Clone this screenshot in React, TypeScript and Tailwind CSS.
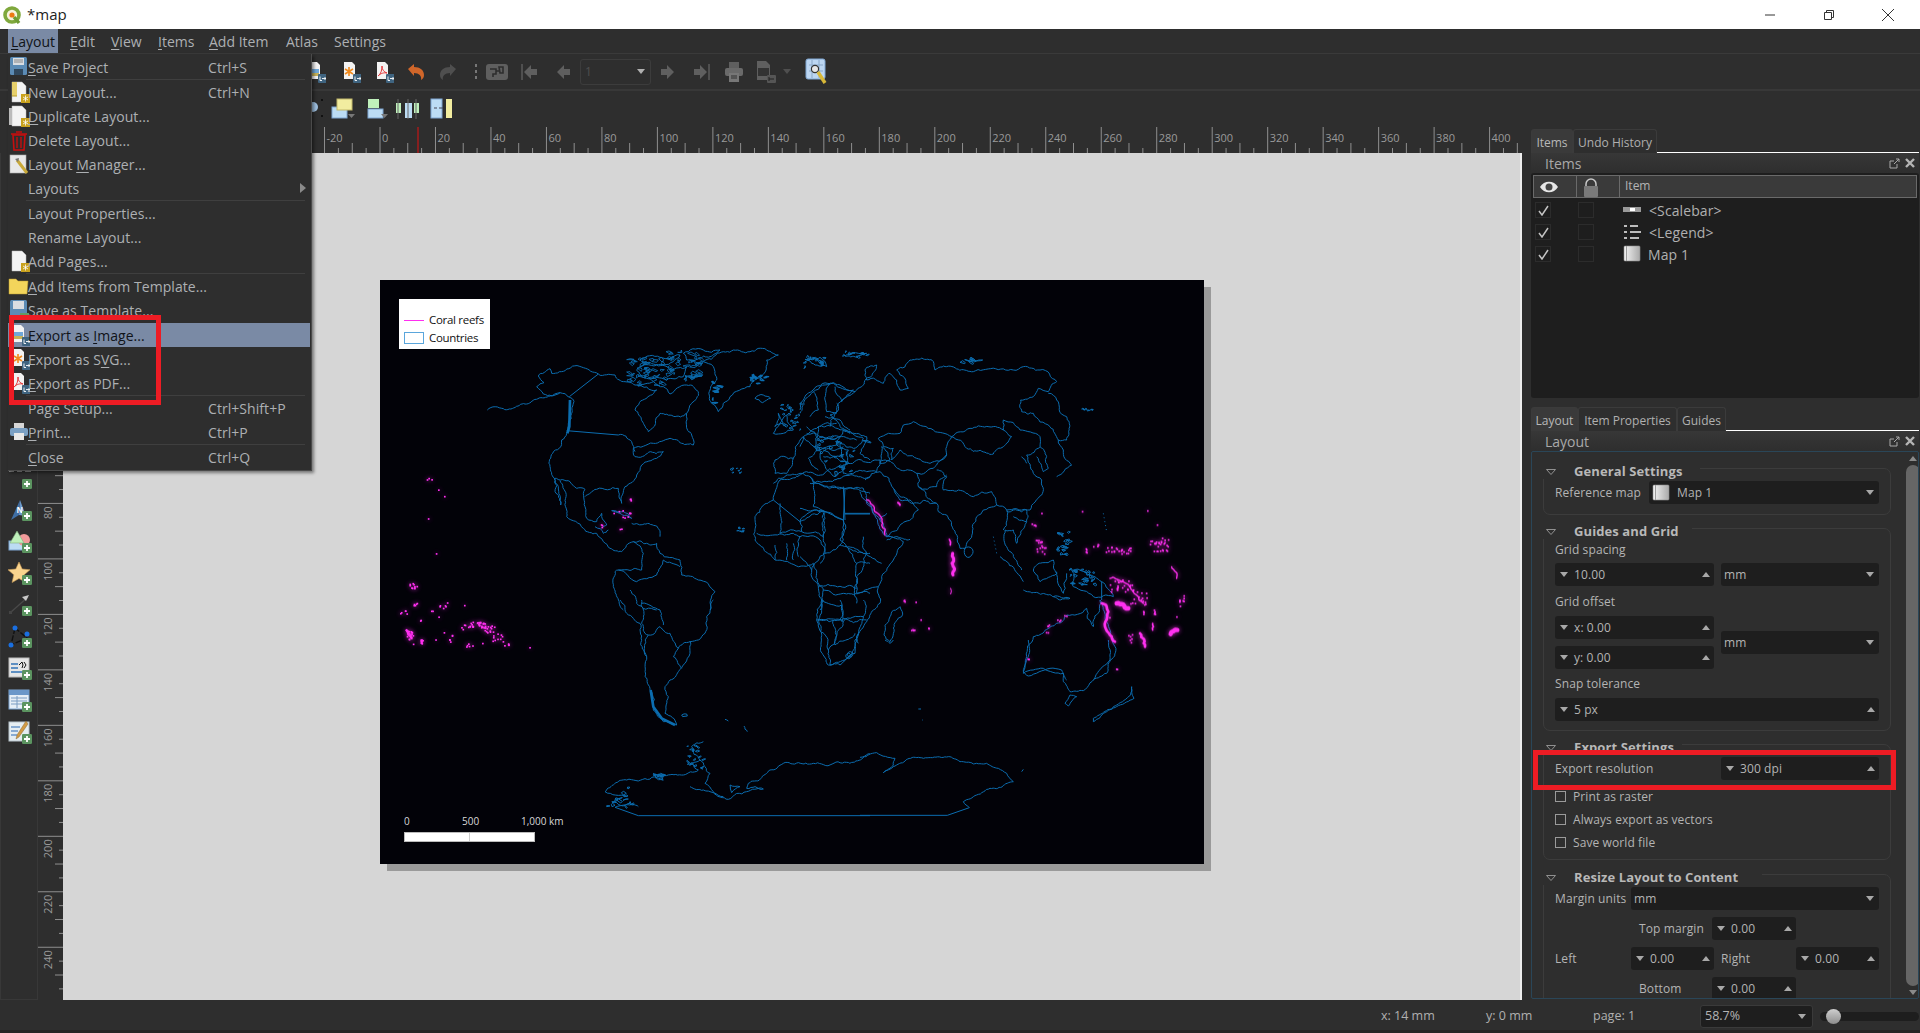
import React from "react";

const FONT = "font-['Open_Sans','Noto_Sans',sans-serif]";

function rng(seed: number) {
  let s = seed;
  return () => {
    s = (s * 16807) % 2147483647;
    return s / 2147483647;
  };
}
function scatterIslands(seed: number, n: number, x0: number, y0: number, x1: number, y1: number, size = 14) {
  const r = rng(seed);
  let d = "";
  for (let i = 0; i < n; i++) {
    const x = x0 + r() * (x1 - x0);
    const y = y0 + r() * (y1 - y0);
    d += `M${x.toFixed(0)},${y.toFixed(0)} l${(r() * size).toFixed(0)},${(-r() * size * 0.6).toFixed(0)} l${(r() * size).toFixed(0)},${(r() * size * 0.7).toFixed(0)} l${(-r() * size).toFixed(0)},${(r() * size * 0.5).toFixed(0)} z `;
  }
  return d;
}
function dots(seed: number, clusters: number[][]) {
  const r = rng(seed);
  const out: number[][] = [];
  clusters.forEach(([x, y, rx, ry, n]) => {
    for (let i = 0; i < n; i++) out.push([x + (r() * 2 - 1) * rx, y + (r() * 2 - 1) * ry]);
  });
  return out;
}
// Midpoint displacement: turns coarse polylines into irregular coast / border lines.
function rough(d: string, seed: number, amount = 0.16) {
  if (d[0] === "!") return d.slice(1);
  if (/[alz]/.test(d)) return d;
  const r = rng(seed * 131 + 7);
  const re = /([MLZ])\s*(-?[\d.]+),(-?[\d.]+)|Z/g;
  let m: RegExpExecArray | null;
  let out = "";
  let cur: number[] | null = null;
  let start: number[] | null = null;
  const seg = (a: number[], b: number[]): string => {
    const dx = b[0] - a[0];
    const dy = b[1] - a[1];
    const len = Math.hypot(dx, dy);
    if (len < 9) return `L${b[0].toFixed(1)},${b[1].toFixed(1)} `;
    const k = (r() * 2 - 1) * Math.min(len * amount, 9);
    const mid = [a[0] + dx / 2 - (dy / len) * k, a[1] + dy / 2 + (dx / len) * k];
    return seg(a, mid) + seg(mid, b);
  };
  while ((m = re.exec(d))) {
    if (m[0] === "Z") {
      if (cur && start) out += seg(cur, start);
      cur = start;
      continue;
    }
    const p = [parseFloat(m[2]), parseFloat(m[3])];
    if (m[1] === "M") {
      out += `M${p[0]},${p[1]} `;
      start = p;
    } else if (cur) {
      out += seg(cur, p);
    }
    cur = p;
  }
  return out;
}

const BLUE = "#0b6db0";

const pathsA = [
  "M352,420 L400,416 L470,402 L540,378 L570,368 L598,382",
  "M570,368 L520,372 L500,350 L522,338 L505,318 L540,296 L545,310 L590,297 L640,293 L685,312 L735,315 L765,335 L800,345 L850,335 L880,350 L900,372 L950,345 L985,365 L965,400 L950,430 L965,495 L970,525 L935,520 L900,505 L850,520 L790,535 L795,560 L880,545 L860,565 L815,585 L800,615 L765,650 L755,700 L745,655 L680,658 L645,680",
  "!M598,380 L685,312",
  "!M590,482 L745,495",
  "M745,495 L785,515 L795,545",
  "M598,382 L612,395 L605,430 L595,460 L590,490 L575,510 L548,550 L540,590 L553,625 L565,650 L572,705 L558,670 L553,625 L600,635 L620,655 L645,658 L645,710 L650,745 L680,755 L695,730 L710,765 L695,775",
  "M570,632 L590,720 L590,740 L640,775 L680,790 L700,815 L720,835 L755,845 L790,815 L860,820 L870,850 L930,870 L935,915 L985,930 L1035,965 L1020,1020",
  "M675,770 L700,790 L715,780 M725,722 L760,725 L785,745 L750,730 Z M785,760 L860,768 L870,800",
  "M950,430 L870,430 L835,485 L795,420 L830,385 L860,360 L800,345",
  "M800,300 L860,285 L900,300 L950,290 L940,320 L890,330 L830,325 Z",
  "M810,270 L870,262 L930,255 L910,275 L850,282 Z",
  "M940,250 L1000,240 L1050,240 L1020,260 L950,270 Z",
  "M1000,275 L1090,240 L1190,240 L1225,255 L1190,270 L1175,320 L1140,350 L1080,380 L1045,425 L1025,400 L1020,360 L1040,330 L1030,290 Z",
  "M1155,385 L1180,375 L1202,385 L1178,398 Z M1305,268 L1350,262 L1370,290 L1325,280 Z M1425,258 L1490,250 L1460,262 Z",
  "M735,905 L745,900 L800,935 L860,915 L880,870 L930,890 M735,905 L730,950 L760,1020 M780,960 L800,1000 L860,1020",
  "M790,815 L820,850 L815,900 L745,900",
  "M1155,740 L1210,690 L1230,630 L1300,610 L1320,620 L1340,640 L1420,655 L1500,670 M1155,740 L1155,810 L1215,870 L1330,880 L1360,960 L1350,1020",
  "!M1210,690 L1290,755",
  "!M1360,722 L1420,750 L1425,655",
  "!M1425,732 L1500,732",
  "M1290,755 L1295,785 L1230,790 L1230,700 M1290,755 L1360,722 M1360,722 L1360,800 M1295,785 L1360,800 L1350,880 M1160,790 L1270,790 L1290,800 L1285,860 M1320,620 L1330,710 L1360,722 M1215,825 L1215,870 M1250,820 L1250,870 M1270,820 L1270,870",
  "M1420,750 L1410,810 L1430,830 L1500,850 M1430,830 L1460,880 L1500,880 M1460,880 L1460,1000 M1360,960 L1420,970 L1500,970",
  "M1215,570 L1270,565 L1250,610 L1215,610 Z M1210,490 L1250,435 L1270,480 L1240,490 Z M1225,430 L1240,460 L1215,470 Z",
  "M1290,430 L1330,365 L1390,340 L1450,360 L1405,400 L1380,470 M1330,365 L1345,420 L1320,440 M1380,340 L1365,390 L1370,425 L1400,430",
  "M1270,565 L1300,500 L1345,470 L1420,480 L1490,500 L1470,550 L1500,570 M1300,500 L1340,540 L1315,565 L1345,600 M1345,470 L1340,540 L1400,525 L1420,480 M1400,525 L1435,540 L1420,600 L1395,620 L1350,550 M1420,480 L1440,490 M1365,440 L1410,450 L1440,480 M1380,505 L1460,510",
  "M1310,490 L1350,500 L1390,495 M1340,510 L1400,505 M1360,540 L1420,560 M1390,560 L1430,575 M1300,500 L1290,530",
  "M1210,640 L1290,610 M1320,640 L1500,620",
];

const pathsB = [
  "M0,210 L10,180 L40,150 L100,128 L165,155 L125,185 L105,140 M165,155 L185,140 L230,75 L195,90 L200,120 L250,130 L270,100 L290,120 L300,150 L325,145 L290,90 L330,60 L400,65 L405,90 L440,80 L520,95 L640,90 L670,80 L720,90 L770,125 L745,155 L715,145 L700,170 L662,180 L665,215 L700,220 L750,260 L775,300 L800,300 L800,230 L770,180 L745,160",
  "M110,190 L115,210 L90,225 L120,260 L190,295 L160,325 L120,310 L140,370",
  "M60,260 L110,250 M50,300 L120,290 M40,320 L130,320 M70,350 L110,350 M20,260 L60,300",
  "M235,295 L300,280 L310,255 L340,245 L400,270 L455,290 L510,265 L610,270 L610,240 L660,270 L720,290 L720,320 L680,345 L700,400 L725,420 L725,465 L690,510 L640,510 L620,515",
  "M455,290 L500,325 L580,342 L610,320 L635,290 L610,270",
  "M235,295 L250,320 L280,325 L275,360 L300,330 L350,355 L390,370 L440,345 L440,320 L455,290",
  "M720,320 L745,385 L730,395 L710,350 M770,410 L815,375 L790,330 L775,300 M665,350 L680,370",
  "M245,320 L270,360 L240,370 L245,340 Z",
  "M130,375 L240,360 L230,395 L200,395 L130,400 Z M0,400 L50,405 L130,375",
  "M195,420 L240,395 L280,445 L300,480 L330,480 L340,490 L355,510 L315,545 L260,590 L240,540 L205,490 L180,455",
  "M240,365 L280,370 L350,400 L355,440 L410,490 L340,490 L300,470 L280,445 M350,400 L400,385 L440,345 M355,440 L410,440 L440,405",
  "M410,390 L440,410 L430,450 L475,450 L520,470 L575,455 L590,495 L550,510 L530,530 L495,625 L480,625 L440,525 L415,515 L410,490",
  "M495,625 a10,14 0 1,0 20,20 a10,10 0 1,0 -20,-20 Z",
  "M590,495 L620,510 L680,510 L680,545 L650,610 L640,570 L615,570 L620,620 L665,690 M620,510 L610,570 M680,545 L640,530",
  "M700,690 L760,660 L770,700 L720,725 Z M600,650 L670,725 M670,750 L810,775 L760,770 M815,690 L905,725 L940,770 L880,770 L820,740 Z M770,695 L790,760 L800,700",
  "!M905,725 L905,780",
  "M680,950 L700,890 L770,850 L800,825 L860,805 L880,860 L900,780 L930,870 L945,920 L920,1000 L880,1020 M680,950 L670,1000 L730,985 L790,1000 L800,1020",
  "!M135,520 L210,520",
  "!M130,440 L135,540",
  "M0,545 L50,510 L75,515 L130,540 M40,430 L190,445 L200,490 L260,590 L310,605 L280,660 L245,710 L235,740 L240,790 L195,850 L165,900 L165,940 L120,975 L85,975 L55,840 L65,780 L55,740 L35,690 L0,650",
  "M0,590 L60,600 L75,640 L120,615 L190,640 L245,670 M130,540 L130,600 L120,615 M190,590 L200,640 L170,710 L170,760 L235,740 M55,740 L170,745 M65,780 L125,795 L120,840 L55,840 M120,840 L200,840 M100,840 L105,915 L165,880 M75,640 L35,690 M0,505 L50,510 L75,515 L70,590 M240,540 L260,520",
  "M300,800 L305,830 L270,905 L252,885 L270,830 Z",
  "M150,935 a8,8 0 1,0 1,0 z",
  "M260,600 L330,598",
];

const pathsC = [
  "M750,0 L770,40 L810,70 L830,170 L825,230 L840,270 L850,330 L880,365 L920,375 L885,340 L895,290 L885,260 L900,240 L925,215 L945,190 L960,160 L960,125 L1005,100 L1010,50 L1030,0",
  "M815,0 L815,70 L835,105 L830,170 M835,105 L870,80 L900,100 L925,145 L910,170 L935,205 M815,10 L870,30 L880,75 M925,145 L960,125",
  "!M735,622 L805,647 L1500,647",
  "M735,622 L805,620 M725,605 L780,610 M705,575 L770,590 M705,575 L770,540 L880,540 L850,520 L940,525 L985,510 L965,490 L990,480 L965,440 L1000,425",
  "M1500,462 L1430,487 L1330,490 L1240,490 L1200,510 L1135,550 L1130,565 L1180,567 L1130,575 L1075,598 L1030,575 L1005,550 L1020,520 L990,480 M960,560 L1000,570 L1060,590 M1080,555 L1110,560 L1085,578 Z",
  "M1340,60 L1375,150 L1380,195 L1430,175 L1465,100 M1340,60 L1420,65 L1480,50 M1360,0 L1340,60 M1375,150 L1395,130 L1420,65",
  "M1435,160 a8,8 0 1,0 1,0 z",
  "M1410,0 L1415,65 M1480,0 L1480,50 L1465,130",
  "M935,345 L950,342 L952,348 L938,350 Z M1065,358 L1075,363 M1122,378 L1132,395",
];

const pathsD = [
  "M0,352 L50,338 L105,355 L100,375 L70,398 L110,375 L180,353 L265,350 L300,365 L380,370 L415,385 L440,400 L460,425 L390,445 L350,465 L310,485 L328,503",
  "!M328,503 L262,526 L0,526",
  "M505,0 L505,50 L490,95 L505,108 L570,85 L605,90 L610,125 L630,155 L670,152 L750,60 L745,0",
  "M630,165 L650,170 L625,198 L615,190 Z M815,140 L822,175 L775,197 L700,245 L700,235 L770,195 L812,165 Z",
  "M75,0 L90,10 L100,0",
  "M175,207 L183,207 M186,240 L188,240 M485,395 L490,388",
];

const reefStrokesB = [
  "M200,480 L225,515 L245,555 L255,585|4",
  "M294,488 L300,495|6",
  "M448,598 L451,615|5",
  "M458,640 L456,670 L459,705|9",
  "M452,745 L452,762|3",
  "M905,790 L920,800 L915,860 L930,885 L945,905|8",
  "M950,790 L985,805|13",
  "M1020,880 L1035,920|8",
  "M1112,882 L1132,870|13",
  "M930,715 L990,740 L1030,790|4",
  "M1115,680 L1130,715|4",
  "M1058,850 L1058,870|5",
];

const dotsA = dots(11, [
  [178, 628, 8, 5, 3], [204, 658, 1, 1, 1], [222, 678, 1, 1, 1], [174, 744, 1, 1, 1], [198, 850, 1, 3, 1],
  [130, 947, 12, 10, 10], [135, 1000, 5, 5, 2], [212, 1010, 15, 5, 3],
  [750, 725, 30, 5, 6], [765, 738, 8, 5, 3], [777, 686, 5, 4, 3], [695, 767, 3, 5, 3], [750, 776, 5, 1, 2],
]);
const dotsB = dots(23, [
  [722, 620, 15, 22, 16], [700, 555, 6, 6, 4], [723, 518, 1, 1, 1], [845, 513, 1, 1, 1], [1040, 510, 1, 1, 1], [1070, 553, 1, 1, 1],
  [858, 630, 3, 6, 4], [885, 615, 10, 10, 4], [940, 628, 25, 8, 14], [985, 632, 25, 12, 8],
  [1075, 610, 30, 22, 28], [1128, 828, 1, 1, 1], [1145, 785, 8, 25, 8], [1060, 810, 4, 12, 5],
  [960, 735, 35, 20, 22], [1010, 770, 30, 25, 18], [1025, 820, 5, 8, 3], [990, 895, 8, 15, 6], [930, 830, 3, 3, 1],
  [312, 780, 2, 4, 3], [347, 785, 1, 1, 1], [362, 838, 1, 1, 1], [345, 868, 15, 3, 4], [384, 864, 2, 2, 2],
  [745, 855, 5, 3, 3], [775, 840, 5, 3, 3], [795, 825, 4, 2, 2], [740, 876, 3, 1, 2], [683, 952, 2, 5, 3], [948, 985, 3, 2, 2],
]);
const dotsC = dots(37, [
  [100, 35, 10, 5, 5], [118, 102, 10, 15, 18], [155, 125, 3, 8, 6], [150, 60, 4, 2, 2], [130, 130, 2, 1, 1],
  [320, 72, 25, 10, 22], [350, 85, 22, 12, 16], [290, 80, 25, 8, 8], [385, 115, 18, 15, 10], [405, 130, 10, 5, 4],
  [310, 133, 28, 6, 6], [240, 118, 5, 6, 3], [245, 105, 3, 2, 2], [220, 97, 1, 1, 1], [195, 118, 1, 1, 1], [478, 141, 1, 1, 1],
  [210, 18, 3, 3, 2], [230, 8, 2, 2, 1], [282, 14, 1, 1, 1], [185, 32, 3, 3, 2], [205, 50, 1, 1, 1], [135, 12, 5, 3, 3],
]);

function ReefDots({ list }: { list: number[][] }) {
  return (
    <>
      {list.map((p, i) => (
        <rect key={i} x={p[0]} y={p[1]} width="5" height="5" fill="#ff30f0" />
      ))}
    </>
  );
}

function WorldMap() {
  const T = 1 / 3;
  const reefs = (
    <>
      <g transform={`translate(370,270) scale(${T})`}>
        <ReefDots list={dotsA} />
      </g>
      <g transform={`translate(800,340) scale(${T})`}>
        {reefStrokesB.map((s, i) => {
          const [d, w] = s.split("|");
          return <path key={i} d={rough(d, i + 200, 0.22)} stroke="#ff30f0" strokeWidth={w} fill="none" strokeLinecap="round" strokeLinejoin="round" />;
        })}
        <ReefDots list={dotsB} />
      </g>
      <g transform={`translate(370,600) scale(${T})`}>
        <path d="M108,88 L125,115 M155,118 L155,132" stroke="#ff30f0" strokeWidth="7" fill="none" />
        <ReefDots list={dotsC} />
      </g>
    </>
  );
  return (
    <svg viewBox="380 280 824 584" className="block w-[824px] h-[584px]">
      <defs>
        <filter id="glow" x="-10%" y="-10%" width="120%" height="120%">
          <feGaussianBlur stdDeviation="2.8" />
        </filter>
      </defs>
      <g fill="none" stroke={BLUE} strokeLinejoin="round">
        <g transform={`translate(370,270) scale(${T})`} strokeWidth="3">
          {pathsA.map((d, i) => <path key={i} d={rough(d, i + 1)} />)}
          <path d={scatterIslands(5, 44, 770, 262, 900, 345, 14)} strokeWidth="2.6" />
          <path d={scatterIslands(7, 34, 880, 245, 985, 330, 14)} strokeWidth="2.6" />
          <path d={scatterIslands(9, 22, 1230, 400, 1290, 480, 8)} />
          <path d={scatterIslands(17, 20, 1340, 500, 1480, 610, 12)} />
          <path d={scatterIslands(31, 8, 1025, 330, 1045, 400, 10)} strokeWidth="3.6" />
          <path d={scatterIslands(33, 10, 1140, 310, 1185, 345, 10)} strokeWidth="3.6" />
          <path d="M600,390 L598,470 L592,490" strokeWidth="8" />
          <path d={scatterIslands(41, 8, 1080, 590, 1115, 610, 5)} />
          <path d={scatterIslands(43, 8, 1100, 770, 1120, 790, 5)} />
        </g>
        <g transform={`translate(800,340) scale(${T})`} strokeWidth="3">
          {pathsB.map((d, i) => <path key={i} d={rough(d, i + 60)} />)}
          <path d={scatterIslands(53, 16, 15, 50, 70, 80, 10)} />
          <path d={scatterIslands(57, 8, 130, 38, 200, 50, 10)} />
          <path d={scatterIslands(59, 20, 770, 570, 805, 645, 9)} />
          <path d={scatterIslands(61, 22, 810, 690, 880, 735, 10)} />
          <path d={scatterIslands(67, 8, 480, 55, 530, 70, 12)} />
          <path d={scatterIslands(71, 7, 845, 205, 890, 212, 5)} />
          <path d="M580,590 L590,640 M910,520 L920,575" strokeDasharray="3 9" />
        </g>
        <g transform={`translate(370,600) scale(${T})`} strokeWidth="3">
          {pathsC.map((d, i) => <path key={i} d={rough(d, i + 120)} />)}
          <path d="M842,270 L850,320 L875,355 L915,375" strokeWidth="8" />
          <path d={scatterIslands(73, 18, 950, 435, 995, 515, 8)} />
          <path d={scatterIslands(79, 8, 850, 518, 880, 530, 10)} />
          <path d={scatterIslands(83, 14, 710, 565, 780, 622, 11)} />
        </g>
        <g transform={`translate(860,640) scale(${T})`} strokeWidth="3">
          {pathsD.map((d, i) => <path key={i} d={rough(d, i + 160, 0.1)} />)}
        </g>
      </g>
      <g filter="url(#glow)" opacity="0.8">{reefs}</g>
      <g>{reefs}</g>
    </svg>
  );
}

function TopRuler() {
  const w = 1460;
  const ox = 380 - 63;
  const s = 2.774;
  const els: React.ReactNode[] = [];
  for (let mm = -110; mm <= 415; mm += 5) {
    const x = ox + mm * s;
    if (x < 0 || x > w) continue;
    const major = mm % 20 === 0;
    const mid = mm % 10 === 0;
    const h = major ? 26 : mid ? 10 : 5;
    els.push(<line key={mm} x1={x} x2={x} y1={26 - h} y2={26} stroke="#8f8f8f" strokeWidth="1" />);
    if (major && x > 250)
      els.push(
        <text key={`t${mm}`} x={x + 2} y={15} fontSize="11" fill="#9a9a9a" fontFamily="Open Sans, sans-serif">
          {mm}
        </text>
      );
  }
  return (
    <svg width={w} height={26} className="block">
      {els}
      <line x1={418 - 63} x2={418 - 63} y1={0} y2={26} stroke="#e01010" />
    </svg>
  );
}

function LeftRuler() {
  const h = 847;
  const oy = 281.5 - 153;
  const s = 2.774;
  const els: React.ReactNode[] = [];
  for (let mm = -40; mm <= 260; mm += 5) {
    const y = oy + mm * s;
    if (y < 0 || y > h) continue;
    const major = mm % 20 === 0;
    const mid = mm % 10 === 0;
    const l = major ? 26 : mid ? 9 : 5;
    els.push(<line key={mm} x1={26 - l} x2={26} y1={y} y2={y} stroke="#8f8f8f" />);
    if (major && y > 320)
      els.push(
        <text
          key={`t${mm}`}
          transform={`translate(14 ${y + 3}) rotate(-90)`}
          textAnchor="end"
          fontSize="11"
          fill="#9a9a9a"
          fontFamily="Open Sans, sans-serif"
        >
          {mm}
        </text>
      );
  }
  return (
    <svg width={26} height={h} className="block">
      {els}
    </svg>
  );
}

const Badge = () => (
  <g>
    <rect x="12" y="13" width="9" height="9" rx="1" fill="#3f6480" />
    <path d="M14 15.5v4h2M16 17.5h4M18.5 16l1.5 1.5-1.5 1.5" stroke="#fff" strokeWidth="0.9" fill="none" />
  </g>
);
const Star = () => (
  <g>
    <rect x="13" y="13" width="9" height="9" fill="#c9a21e" />
    <path d="M17.5 14.5v6M15 16l5 3M20 16l-5 3" stroke="#fff" strokeWidth="0.8" />
  </g>
);
const Doc = () => <path d="M4 1h10l4 4v16H4z" fill="#f3f3f3" stroke="#bbb" strokeWidth="0.5" />;

function I({ children, s = 22, cls = "" }: { children: React.ReactNode; s?: number; cls?: string }) {
  return (
    <svg width={s} height={s} viewBox="0 0 22 22" className={`block shrink-0 ${cls}`}>
      {children}
    </svg>
  );
}

const menuIcons: Record<string, React.ReactNode> = {
  save: (
    <I>
      <rect x="2" y="1" width="17" height="18" rx="1.5" fill="#5b8bb5" />
      <rect x="5" y="2" width="11" height="7" fill="#d9dde2" />
      <path d="M6 4h9M6 6h9" stroke="#888" />
      <rect x="6" y="13" width="9" height="6" fill="#30485e" />
    </I>
  ),
  newl: (
    <I>
      <Doc />
      <path d="M4 1h5v14H4z" fill="#e6cf6a" />
      <path d="M9 15H4" stroke="#b59b2a" />
      <Star />
    </I>
  ),
  dup: (
    <I>
      <rect x="1" y="3" width="13" height="17" fill="#bbb" />
      <Doc />
      <Star />
    </I>
  ),
  del: (
    <I>
      <path d="M5 6h12l-1 15H6z" fill="none" stroke="#c50f0f" strokeWidth="1.6" />
      <path d="M3 5h16M8 3h6M9 8v11M13 8v11" stroke="#c50f0f" strokeWidth="1.4" />
    </I>
  ),
  mgr: (
    <I>
      <rect x="2" y="2" width="16" height="18" fill="#e8e8e8" stroke="#aaa" strokeWidth="0.6" />
      <path d="M9 7l10 13" stroke="#c8a93a" strokeWidth="3" />
      <path d="M7 6l4-1-1 4z" fill="#777" />
    </I>
  ),
  add: (
    <I>
      <Doc />
      <Star />
    </I>
  ),
  folder: (
    <I>
      <path d="M1 4h7l2 2h10l-1 13H1z" fill="#f3d55b" stroke="#b8982f" strokeWidth="0.5" />
    </I>
  ),
  tpl: (
    <I>
      <rect x="2" y="1" width="17" height="18" rx="1.5" fill="#5b8bb5" />
      <rect x="5" y="2" width="11" height="8" fill="#d9dde2" />
      <rect x="12" y="14" width="9" height="7" fill="#5f9a66" />
    </I>
  ),
  img: (
    <I>
      <g transform="translate(2 0)">
        <path d="M3 1h8l3 3v14H3z" fill="#f3f3f3" />
        <rect x="3" y="8" width="10" height="5" fill="#6fa7d8" />
        <rect x="3" y="12" width="10" height="3" fill="#c7b25a" />
        <Badge />
      </g>
    </I>
  ),
  svg: (
    <I>
      <g transform="translate(2 0)">
        <path d="M3 1h8l3 3v14H3z" fill="#f3f3f3" />
        <path d="M8 6v9M4 8l8 5M12 8l-8 5" stroke="#f08a1d" strokeWidth="1.6" />
        <Badge />
      </g>
    </I>
  ),
  pdf: (
    <I>
      <g transform="translate(2 0)">
        <path d="M3 1h8l3 3v14H3z" fill="#f3f3f3" />
        <path d="M4 15c3-2 4-6 4-10 0 4 2 6 5 7-3-.5-6 0-9 3z" fill="none" stroke="#e5383b" strokeWidth="1" />
        <Badge />
      </g>
    </I>
  ),
  print: (
    <I>
      <rect x="6" y="2" width="10" height="6" fill="#d6d6d6" />
      <rect x="2" y="7" width="18" height="8" rx="2" fill="#7aa0c4" />
      <rect x="6" y="12" width="10" height="7" fill="#e8e8e8" />
    </I>
  ),
};

function U({ t, u }: { t: string; u: number }) {
  return (
    <>
      {t.slice(0, u)}
      <span className="underline underline-offset-2">{t[u]}</span>
      {t.slice(u + 1)}
    </>
  );
}

type MI = { icon?: string; t: string; u?: number; sc?: string; sep?: boolean; arrow?: boolean; hl?: boolean; tall?: boolean };
const menu: MI[] = [
  { icon: "save", t: "Save Project", u: 0, sc: "Ctrl+S", sep: true },
  { icon: "newl", t: "New Layout...", sc: "Ctrl+N" },
  { icon: "dup", t: "Duplicate Layout...", u: 0 },
  { icon: "del", t: "Delete Layout..." },
  { icon: "mgr", t: "Layout Manager...", u: 7 },
  { t: "Layouts", arrow: true, sep: true },
  { t: "Layout Properties..." },
  { t: "Rename Layout..." },
  { icon: "add", t: "Add Pages...", sep: true },
  { icon: "folder", t: "Add Items from Template...", u: 0 },
  { icon: "tpl", t: "Save as Template...", tall: true },
  { icon: "img", t: "Export as Image...", u: 10, hl: true },
  { icon: "svg", t: "Export as SVG...", u: 11 },
  { icon: "pdf", t: "Export as PDF...", u: 0, sep: true },
  { t: "Page Setup...", sc: "Ctrl+Shift+P" },
  { icon: "print", t: "Print...", u: 0, sc: "Ctrl+P", sep: true },
  { t: "Close", u: 0, sc: "Ctrl+Q" },
];

function Menu() {
  return (
    <div className="absolute left-[8px] top-[54px] w-[304px] h-[417px] bg-[#2e2e2e] border-r border-b border-[#4a4a4a] shadow-[2px_2px_3px_rgba(0,0,0,0.45)] pt-[1px] text-[14px] tracking-[0.06px] text-[#adb0b3]">
      {menu.map((m, i) => (
        <React.Fragment key={i}>
          <div className={`relative flex items-center h-[24px] ${m.hl ? "bg-[#7a8aa5] text-[#101318] mr-[1px]" : ""} ${m.tall ? "mb-[1px]" : ""}`}>
            <div className="w-[20px] ml-[1px] flex items-center justify-center">{m.icon ? menuIcons[m.icon] : null}</div>
            <div className="ml-[-1px] w-[180px] pl-[0px] whitespace-nowrap">{m.u !== undefined ? <U t={m.t} u={m.u} /> : m.t}</div>
            <div className="whitespace-nowrap">{m.sc}</div>
            {m.arrow ? (
              <svg width="6" height="10" className="absolute right-[5px] top-[7px]">
                <path d="M0 0l6 5-6 5z" fill="#8a8a8a" />
              </svg>
            ) : null}
          </div>
          {m.sep ? <div className="h-[1px] ml-[18px] mr-[6px] bg-[#3f3f3f]" /> : null}
        </React.Fragment>
      ))}
    </div>
  );
}

function Tri({ up, c = "#a8a8a8" }: { up?: boolean; c?: string }) {
  return (
    <svg width="8" height="5" className="block shrink-0">
      <path d={up ? "M0 5L4 0l4 5z" : "M0 0h8L4 5z"} fill={c} />
    </svg>
  );
}

function Spin({ v, w }: { v: string; w: string }) {
  return (
    <div className={`${w} h-[23px] shrink-0 rounded-[3px] bg-[#1e1e1e] flex items-center pl-[5px] pr-[4px] text-[12px] text-[#b4b4b4]`}>
      <Tri />
      <span className="ml-[6px] flex-1">{v}</span>
      <Tri up />
    </div>
  );
}
function Combo({ children, w }: { children: React.ReactNode; w: string }) {
  return (
    <div className={`${w} h-[23px] shrink-0 rounded-[3px] bg-[#1e1e1e] flex items-center pl-[3px] pr-[5px] text-[12px] text-[#b4b4b4]`}>
      <span className="flex-1 flex items-center">{children}</span>
      <Tri />
    </div>
  );
}
const MapIcon = ({ s = 18 }: { s?: number }) => (
  <svg width={s} height={s} viewBox="0 0 18 18" className="block shrink-0">
    <defs>
      <linearGradient id="mg" x1="0" x2="1" y1="0" y2="0">
        <stop offset="0" stopColor="#f5f5f5" />
        <stop offset="1" stopColor="#a9a9a9" />
      </linearGradient>
    </defs>
    <rect x="1" y="1" width="16" height="15" rx="1" fill="url(#mg)" stroke="#8d8d8d" strokeWidth="0.6" />
    <rect x="3" y="1" width="1" height="15" fill="#9c9c9c" />
  </svg>
);

function Group({ title, h, line, children }: { title: string; h: string; line: string; children: React.ReactNode }) {
  return (
    <div className={`relative ${h} w-[348px] ml-[11px] border border-[#3c3c3c] rounded-[7px] px-[11px] text-[12px] tracking-[0.1px] text-[#b4b4b4]`}>
      <div className={`absolute left-[-2px] top-[-4px] h-[14px] ${line} bg-[#2e2e2e] flex items-center pl-[4px]`}>
        <svg width="10" height="6" className="block">
          <path d="M0.5 0.5h9L5 5.5z" fill="none" stroke="#909090" />
        </svg>
        <span className="ml-[18px] font-bold text-[13px] tracking-[0.1px] text-[#b8b8b8] whitespace-nowrap">{title}</span>
      </div>
      {children}
    </div>
  );
}

function TBtn({ on, children, w }: { on?: boolean; children: React.ReactNode; w: string }) {
  return (
    <div className={`${w} h-[24px] pt-[2px] flex items-center justify-center rounded-t-[3px] border-t border-x border-[#3b3b3b] text-[12px] ${on ? "bg-[#3a3a3a] text-[#b8b8b8]" : "bg-[#2e2e2e] text-[#b0b0b0]"}`}>
      {children}
    </div>
  );
}
function PanelTitle({ t }: { t: string }) {
  return (
    <div className="h-[20px] flex items-center pl-[14px] pr-[3px] bg-gradient-to-b from-[#373737] to-[#2e2e2e] text-[14px] text-[#a9a9a9]">
      <span className="flex-1">{t}</span>
      <svg width="11" height="11" viewBox="0 0 11 11" className="block mr-[5px]">
        <path d="M8 6v4H1V3h4M5 6l5-5M7 1h3v3" stroke="#aaa" fill="none" />
      </svg>
      <svg width="10" height="10" viewBox="0 0 10 10" className="block mr-[1px]">
        <path d="M1 1l8 8M9 1l-8 8" stroke="#b5b5b5" strokeWidth="2.4" />
      </svg>
    </div>
  );
}

function Row({ icon, t, tx }: { icon: React.ReactNode; t: string; tx?: string }) {
  return (
    <div className="h-[22px] flex items-center text-[14px] tracking-[0.1px] text-[#b0b0b0]">
      <div className="w-[16px] h-[16px] ml-[2px] border border-[#2c2c2c] flex items-center justify-center">
        <svg width="11" height="11" viewBox="0 0 11 11">
          <path d="M1 6l3 4 6-9" stroke="#c4c4c4" strokeWidth="1.5" fill="none" />
        </svg>
      </div>
      <div className="w-[16px] h-[16px] ml-[27px] border border-[#2c2c2c]" />
      <div className="w-[18px] ml-[29px] flex justify-center">{icon}</div>
      <span className={tx || "ml-[8px]"}>{t}</span>
    </div>
  );
}

const Plus = () => (
  <g>
    <rect x="14" y="13" width="10" height="10" rx="1.2" fill="#5b9460" />
    <path d="M19 15v6M16 18h6" stroke="#fff" strokeWidth="1.8" />
  </g>
);
function LIcon({ children }: { children: React.ReactNode }) {
  return (
    <svg width="26" height="24" viewBox="0 0 26 24" className="block shrink-0 ml-[7px]">
      {children}
      <Plus />
    </svg>
  );
}

function TB({ children, ml }: { children: React.ReactNode; ml: string }) {
  return <div className={`${ml} w-[24px] h-[24px] shrink-0 flex items-center justify-center`}>{children}</div>;
}

const GREY = "#5f5f5f";

export default function App() {
  return (
    <div className={`relative w-[1920px] h-[1033px] overflow-hidden flex flex-col bg-[#2e2e2e] ${FONT}`}>
      {/* Title bar */}
      <div className="h-[29px] shrink-0 bg-white flex items-center pl-[2px]">
        <svg width="20" height="20" viewBox="0 0 20 20" className="block">
          <circle cx="10" cy="10" r="7" fill="#f7f2dd" stroke="#7fa83c" strokeWidth="3.6" />
          <path d="M12 12l5 6" stroke="#6f9c33" strokeWidth="3.4" />
          <circle cx="10" cy="10" r="2.6" fill="#ee7913" />
        </svg>
        <span className="ml-[5px] text-[15px] text-[#222]">*map</span>
        <div className="ml-auto flex items-center">
          <svg width="12" height="12" className="block mr-[47px]"><path d="M1 6h10" stroke="#333" /></svg>
          <svg width="12" height="12" className="block mr-[46px]">
            <path d="M1.5 3.5h7v7h-7zM3.5 3V1.5h7v7H9" stroke="#333" fill="none" />
          </svg>
          <svg width="14" height="14" className="block mr-[25px]"><path d="M1 1l12 12M13 1L1 13" stroke="#333" /></svg>
        </div>
      </div>
      {/* Menu bar */}
      <div className="h-[25px] shrink-0 flex items-center pl-[8px] text-[14px] text-[#adb0b3] border-b border-[#3a3a3a]">
        <div className="w-[50px] h-[24px] flex items-center pl-[3px] bg-[#7a8aa5] text-[#101318]"><U t="Layout" u={0} /></div>
        <div className="ml-[12px] w-[41px]"><U t="Edit" u={0} /></div>
        <div className="w-[47px]"><U t="View" u={0} /></div>
        <div className="w-[51px]"><U t="Items" u={0} /></div>
        <div className="w-[77px]"><U t="Add Item" u={0} /></div>
        <div className="w-[48px]">Atlas</div>
        <div>Settings</div>
      </div>
      {/* Toolbar 1 */}
      <div className="h-[37px] shrink-0 flex items-center pl-[303px] border-b-2 border-[#383838]">
        <TB ml="">{menuIcons.img}</TB>
        <TB ml="ml-[11px]">{menuIcons.svg}</TB>
        <TB ml="ml-[9px]">{menuIcons.pdf}</TB>
        <TB ml="ml-[9px]">
          <svg width="20" height="18" viewBox="0 0 20 18"><path d="M2 6l6-5v3c6 0 10 3 10 8 0 2-1 4-3 5 1-4-2-7-7-7v3z" fill="#d0662a" /></svg>
        </TB>
        <TB ml="ml-[8px]">
          <svg width="20" height="18" viewBox="0 0 20 18"><path d="M18 6l-6-5v3C6 4 2 7 2 12c0 2 1 4 3 5-1-4 2-7 7-7v3z" fill="#4f4f4f" /></svg>
        </TB>
        <div className="ml-[13px] w-[5px] h-[15px] flex flex-col justify-between items-center"><i className="block w-[2px] h-[3px] bg-[#777]" /><i className="block w-[2px] h-[3px] bg-[#777]" /><i className="block w-[2px] h-[3px] bg-[#777]" /></div>
        <TB ml="ml-[7px]">
          <svg width="22" height="18" viewBox="0 0 22 18"><rect x="0" y="1" width="22" height="16" rx="3" fill={GREY} /><path d="M4 6h6v5H7v3M13 4h4v6h-3zM10 8h4" stroke="#2e2e2e" strokeWidth="1.6" fill="none" /></svg>
        </TB>
        <TB ml="ml-[9px]">
          <svg width="20" height="18" viewBox="0 0 20 18"><path d="M2 1v16" stroke={GREY} strokeWidth="1.4" /><path d="M4 9l7-7v4h6v6h-6v4z" fill={GREY} /></svg>
        </TB>
        <TB ml="ml-[10px]">
          <svg width="16" height="18" viewBox="0 0 16 18"><path d="M1 9l7-7v4h6v6H8v4z" fill={GREY} /></svg>
        </TB>
        <div className="ml-[4px] w-[71px] h-[26px] rounded-[3px] border border-[#3c3c3c] flex items-center justify-between pl-[4px] pr-[5px] text-[12px] text-[#4f4f4f]">
          <span>1</span>
          <Tri c="#b0b0b0" />
        </div>
        <TB ml="ml-[4px]">
          <svg width="16" height="18" viewBox="0 0 16 18"><path d="M15 9L8 2v4H2v6h6v4z" fill={GREY} /></svg>
        </TB>
        <TB ml="ml-[10px]">
          <svg width="20" height="18" viewBox="0 0 20 18"><path d="M18 1v16" stroke={GREY} strokeWidth="1.4" /><path d="M16 9L9 2v4H3v6h6v4z" fill={GREY} /></svg>
        </TB>
        <TB ml="ml-[9px]">
          <svg width="20" height="22" viewBox="0 0 20 22"><rect x="5" y="1" width="10" height="6" fill={GREY} /><rect x="1" y="7" width="18" height="8" rx="2" fill="#6a6a6a" /><rect x="5" y="12" width="10" height="9" fill="#777" /><path d="M7 15h6M7 17h6" stroke="#333" /></svg>
        </TB>
        <TB ml="ml-[8px]">
          <svg width="22" height="24" viewBox="0 0 22 24"><path d="M2 1h9l4 4v15H2z" fill={GREY} /><rect x="3" y="8" width="11" height="8" fill="#333" /><rect x="12" y="15" width="9" height="8" rx="1" fill="#555" /><path d="M14 17v4M14 19h5" stroke="#222" /></svg>
        </TB>
        <div className="ml-[5px]"><Tri c="#4f4f4f" /></div>
        <TB ml="ml-[14px]">
          <svg width="26" height="28" viewBox="0 0 26 28" className="shrink-0">
            <rect x="2" y="1" width="19" height="20" rx="2" fill="#bcd6f2" stroke="#7ea6d2" />
            <path d="M5 7h14M5 13h14M8 2v18M15 2v18" stroke="#8aa8c8" />
            <circle cx="11" cy="11" r="3.6" fill="#e6e6e6" stroke="#333" strokeWidth="1.2" />
            <path d="M14 14l7 11" stroke="#d8b838" strokeWidth="3.4" />
          </svg>
        </TB>
      </div>
      {/* Toolbar 2 */}
      <div className="h-[36px] shrink-0 flex items-center pl-[301px]">
        <TB ml="">
          <svg width="24" height="22" viewBox="0 0 24 22"><circle cx="12" cy="9" r="5" fill="#9fc0e0" /><path d="M3 2h2M20 2h2M3 18h2M20 18h2" stroke="#111" strokeWidth="2" /></svg>
        </TB>
        <TB ml="ml-[6px]">
          <svg width="24" height="22" viewBox="0 0 24 22"><rect x="1" y="9" width="15" height="11" fill="#bcdcf4" stroke="#7ea6d2" /><rect x="6" y="1" width="15" height="11" fill="#f2eda0" stroke="#c2b86a" /><path d="M17 16h7l-3.500 4z" fill="#777" /></svg>
        </TB>
        <TB ml="ml-[9px]">
          <svg width="24" height="22" viewBox="0 0 24 22"><rect x="4" y="1" width="11" height="9" fill="#bff0bb" /><rect x="4" y="11" width="15" height="9" fill="#bcdcf4" stroke="#7ea6d2" /><path d="M17 16h7l-3.500 4z" fill="#777" /></svg>
        </TB>
        <TB ml="ml-[8px]">
          <svg width="24" height="22" viewBox="0 0 24 22"><rect x="0" y="5" width="5" height="10" fill="#bff0bb" /><rect x="9" y="5" width="7" height="15" fill="#bcdcf4" /><rect x="18" y="5" width="5" height="10" fill="#bff0bb" /><path d="M2 1v20M12 1v20M20 1v20" stroke="#666" /></svg>
        </TB>
        <TB ml="ml-[10px]">
          <svg width="24" height="22" viewBox="0 0 24 22"><rect x="1" y="1" width="11" height="19" fill="#bcdcf4" stroke="#7ea6d2" /><rect x="16" y="1" width="6" height="19" fill="#f2eda0" /><path d="M4 10h3M9 10h4" stroke="#445" /></svg>
        </TB>
      </div>
      {/* Main */}
      <div className="h-[873px] shrink-0 flex">
        <div className="w-[1530px] flex flex-col">
          <div className="h-[26px] shrink-0 flex pl-[63px]">
            <TopRuler />
          </div>
          <div className="flex-1 flex min-h-0">
            <div className="w-[38px] shrink-0 border border-[#383838] border-t-0 pt-[313px] flex flex-col gap-[7.85px]">
              <LIcon><path d="M1 5h5M9 5h5M17 5h6" stroke="#8a8a8a" strokeWidth="2.2" /></LIcon>
              <LIcon><path d="M12 2L3 22l8-5z" fill="#3f6ea5" /><path d="M12 2l6 16-7-1z" fill="#6b97c9" /><text x="8.500" y="15" fontSize="8" fontWeight="700" fill="#fff">N</text></LIcon>
              <LIcon><rect x="1" y="11" width="16" height="9" fill="#bcdcf4" stroke="#7ea6d2" /><circle cx="16" cy="10" r="6" fill="#f29b9b" /><path d="M9 1l7 12H2z" fill="#bff0bb" stroke="#7fb07a" strokeWidth="0.6" /></LIcon>
              <LIcon><path d="M11 0l3.200 7 7.800.8-5.800 5 1.700 7.700L11 16.500 4.100 20.500 5.800 12.800 0 7.800 7.800 7z" fill="#f9d48e" stroke="#c99a55" strokeWidth="0.6" /></LIcon>
              <LIcon><path d="M3 19L20 4" stroke="#4a4a4a" strokeWidth="1.300" /><rect x="1" y="18" width="3" height="3" fill="#444" /><path d="M21 2l-7 2 4 4z" fill="#c8c8c8" /></LIcon>
              <LIcon><path d="M7 3L3 20l16-7z" fill="none" stroke="#111" strokeWidth="1.400" strokeDasharray="6 1.500" /><circle cx="7" cy="3" r="2.500" fill="#1a6fe0" /><circle cx="19" cy="9" r="2.500" fill="#1a6fe0" /><circle cx="3" cy="20" r="2.500" fill="#1a6fe0" /></LIcon>
              <LIcon><rect x="1" y="1" width="20" height="19" fill="#e6e6e6" stroke="#bbb" /><path d="M3 7h7M3 11h7M3 15h11" stroke="#5e8fc2" strokeWidth="2" /><path d="M11 8l3-3 1 3-1 3M18 8l-2-3M18 8l-2 3" stroke="#111" fill="none" /></LIcon>
              <LIcon><rect x="1" y="1" width="20" height="19" fill="#e6eef6" stroke="#7ea6d2" /><rect x="1" y="1" width="20" height="5" fill="#6b97c9" /><path d="M3 9h16M3 12h16M3 15h16M9 7v12" stroke="#7a9cc2" /></LIcon>
              <LIcon><rect x="1" y="1" width="20" height="19" fill="#e6eef2" stroke="#b8c4cc" /><path d="M3 6h9M3 10h7M3 14h6" stroke="#6b97c9" strokeWidth="1.400" /><path d="M18 0L9 14l-1 4 3-2 9-13z" fill="#d19a45" stroke="#7a5a25" strokeWidth="0.4" /></LIcon>
            </div>
            <div className="w-[25px] shrink-0 overflow-hidden"><LeftRuler /></div>
            <div className="w-[1459px] shrink-0 bg-[#d6d6d6] pl-[317px] pt-[127px] border-r-2 border-[#eeeeee]">
              <div className="relative w-[824px] h-[584px] bg-[#020208] shadow-[7px_7px_0_#9a9a9a]">
                <WorldMap />
                <div className="absolute left-[19px] top-[19px] w-[91px] h-[50px] bg-white pt-[12px] pl-[5px] text-[11.5px] tracking-[-0.3px] text-[#111]">
                  <div className="h-[18px] flex items-center">
                    <i className="block w-[20px] h-[1px] bg-[#ff2ef0]" />
                    <span className="ml-[5px]">Coral reefs</span>
                  </div>
                  <div className="h-[18px] flex items-center">
                    <i className="block w-[20px] h-[12px] border border-[#5aa6dc]" />
                    <span className="ml-[5px]">Countries</span>
                  </div>
                </div>
                <div className="absolute left-[24px] top-[534px] w-[170px] text-[10px] text-[#d8d8d8]">
                  <div className="h-[15px] flex items-center">
                    <span className="w-[58px]">0</span>
                    <span className="w-[59px]">500</span>
                    <span>1,000 km</span>
                  </div>
                  <div className="mt-[3px] w-[131px] h-[10px] bg-white border border-[#bbb] flex">
                    <i className="block w-[65px] border-r border-[#ccc]" />
                  </div>
                </div>
              </div>
            </div>
          </div>
        </div>
        {/* Right */}
        <div className="w-[390px] shrink-0 pt-[2px] pl-[1px] pr-[1px] flex flex-col">
          <div className="flex h-[24px] shrink-0 items-end">
            <TBtn on w="w-[42px]">Items</TBtn>
            <TBtn w="w-[84px]">Undo History</TBtn>
            <div className="flex-1 h-[1px] bg-white" />
          </div>
          <PanelTitle t="Items" />
          <div className="h-[225px] shrink-0 bg-[#1e1e1e] rounded-[3px] pt-[2px] px-[2px]">
            <div className="h-[23px] flex bg-[#3a3a3a] border border-[#6a6a6a] text-[12px] text-[#b4b4b4]">
              <div className="w-[43px] border-r border-[#6a6a6a] flex items-center pl-[5px]">
                <svg width="20" height="12" viewBox="0 0 20 12"><path d="M1 6c4-7 14-7 18 0-4 7-14 7-18 0z" fill="#e6e6e6" /><circle cx="10" cy="6" r="3.500" fill="#444" /></svg>
              </div>
              <div className="w-[43px] border-r border-[#6a6a6a] flex items-end pl-[6px]">
                <svg width="16" height="19" viewBox="0 0 16 19"><path d="M3 9V6a5 5 0 0 1 10 0v3" stroke="#c9c9c9" strokeWidth="1.500" fill="none" /><rect x="1" y="8" width="14" height="11" rx="1" fill="#7a7a7a" /></svg>
              </div>
              <div className="pl-[5px] pb-[2px] flex items-center">Item</div>
            </div>
            <div className="pt-[1px]">
              <Row t="<Scalebar>" icon={<svg width="18" height="8"><rect x="0" y="1" width="18" height="5" fill="#9a9a9a" /><rect x="7" y="2" width="5" height="3" fill="#fff" /></svg>} />
              <Row t="<Legend>" icon={<svg width="18" height="16"><path d="M1 2h3M7 2h8M1 8h3M7 8h11M1 14h3M7 14h9" stroke="#bcbcbc" strokeWidth="2" /></svg>} />
              <Row t="Map 1" tx="ml-[7px]" icon={<MapIcon />} />
            </div>
          </div>
          <div className="flex h-[24px] shrink-0 items-end mt-[9px]">
            <TBtn on w="w-[47px]">Layout</TBtn>
            <TBtn w="w-[99px]">Item Properties</TBtn>
            <TBtn w="w-[49px]">Guides</TBtn>
            <div className="flex-1 h-[1px] bg-white" />
          </div>
          <PanelTitle t="Layout" />
          <div className="h-[548px] shrink-0 border border-[#2a4658] rounded-[2px] flex overflow-hidden">
            <div className="w-[373px] shrink-0 pt-[16px]">
              <Group title="General Settings" h="h-[47px]" line="w-[158px]">
                <div className="pt-[12px] flex items-center">
                  <span className="w-[94px] shrink-0 whitespace-nowrap pt-[1px]">Reference map</span>
                  <Combo w="w-[230px]"><span className="mr-[7px]"><MapIcon /></span>Map 1</Combo>
                </div>
              </Group>
              <div className="h-[13px]" />
              <Group title="Guides and Grid" h="h-[203px]" line="w-[150px]">
                <div className="pt-[13px] h-[29px] flex items-end leading-[16px]">Grid spacing</div>
                <div className="mt-[5px] flex gap-[7px]">
                  <Spin v="10.00" w="w-[159px]" />
                  <Combo w="w-[158px]">mm</Combo>
                </div>
                <div className="mt-[8px] h-[16px] leading-[16px]">Grid offset</div>
                <div className="mt-[6px] flex gap-[7px] items-center">
                  <div className="flex flex-col gap-[7px]">
                    <Spin v="x: 0.00" w="w-[159px]" />
                    <Spin v="y: 0.00" w="w-[159px]" />
                  </div>
                  <Combo w="w-[158px]">mm</Combo>
                </div>
                <div className="mt-[7px] h-[16px] leading-[16px]">Snap tolerance</div>
                <div className="mt-[6px]"><Spin v="5 px" w="w-[324px]" /></div>
              </Group>
              <div className="h-[13px]" />
              <Group title="Export Settings" h="h-[116px]" line="w-[140px]">
                <div className="pt-[12px] flex items-center">
                  <span className="w-[166px] shrink-0 pt-[1px]">Export resolution</span>
                  <Spin v="300 dpi" w="w-[158px]" />
                </div>
                <div className="mt-[5px] flex flex-col">
                  {["Print as raster", "Always export as vectors", "Save world file"].map((t) => (
                    <div key={t} className="h-[23px] flex items-center">
                      <i className="block w-[11px] h-[11px] border border-[#9a9a9a] mr-[7px]" />
                      {t}
                    </div>
                  ))}
                </div>
              </Group>
              <div className="h-[14px]" />
              <Group title="Resize Layout to Content" h="h-[140px]" line="w-[220px]">
                <div className="pt-[12px] flex items-center">
                  <span className="w-[76px] shrink-0 whitespace-nowrap">Margin units</span>
                  <Combo w="w-[248px]">mm</Combo>
                </div>
                <div className="mt-[7px] flex items-center">
                  <span className="w-[157px] pl-[84px] shrink-0 whitespace-nowrap">Top margin</span>
                  <Spin v="0.00" w="w-[84px]" />
                </div>
                <div className="mt-[7px] flex items-center">
                  <span className="w-[76px] shrink-0">Left</span>
                  <Spin v="0.00" w="w-[83px]" />
                  <span className="w-[82px] pl-[7px] shrink-0">Right</span>
                  <Spin v="0.00" w="w-[83px]" />
                </div>
                <div className="mt-[7px] flex items-center">
                  <span className="w-[157px] pl-[84px] shrink-0">Bottom</span>
                  <Spin v="0.00" w="w-[84px]" />
                </div>
              </Group>
            </div>
            <div className="w-[15px] shrink-0 flex flex-col items-center pt-[4px] pb-[3px]">
              <Tri up c="#8a8a8a" />
              <div className="mt-[4px] flex-1 w-[14px] rounded-[7px] bg-[#666]" />
              <div className="mt-[4px]"><Tri c="#8a8a8a" /></div>
            </div>
          </div>
        </div>
      </div>
      {/* Status bar */}
      <div className="h-[30px] shrink-0 flex items-center text-[12.5px] text-[#b0b0b0] pl-[1381px] pt-[2px]">
        <span className="w-[105px]">x: 14 mm</span>
        <span className="w-[107px]">y: 0 mm</span>
        <span className="w-[107px]">page: 1</span>
        <div className="w-[113px] h-[23px] rounded-[3px] bg-[#1e1e1e] border border-[#3a3a3a] flex items-center justify-between pl-[4px] pr-[6px] text-[#b4b4b4]">
          58.7%
          <Tri />
        </div>
        <div className="relative ml-[7px] w-[99px] h-[9px] rounded-full bg-[#1e1e1e]">
          <div className="absolute left-[6px] top-[-3px] w-[15px] h-[15px] rounded-full bg-gradient-to-b from-[#cfcfcf] to-[#8e8e8e]" />
        </div>
      </div>
      <div className="flex-1 bg-[#242424]" />

      <Menu />
      {/* Red annotations */}
      <div className="absolute left-[9px] top-[315px] w-[152px] h-[90px] border-[5px] border-[#ed1c24]" />
      <div className="absolute left-[1533px] top-[750px] w-[363px] h-[40px] border-[5px] border-[#ed1c24]" />
    </div>
  );
}
